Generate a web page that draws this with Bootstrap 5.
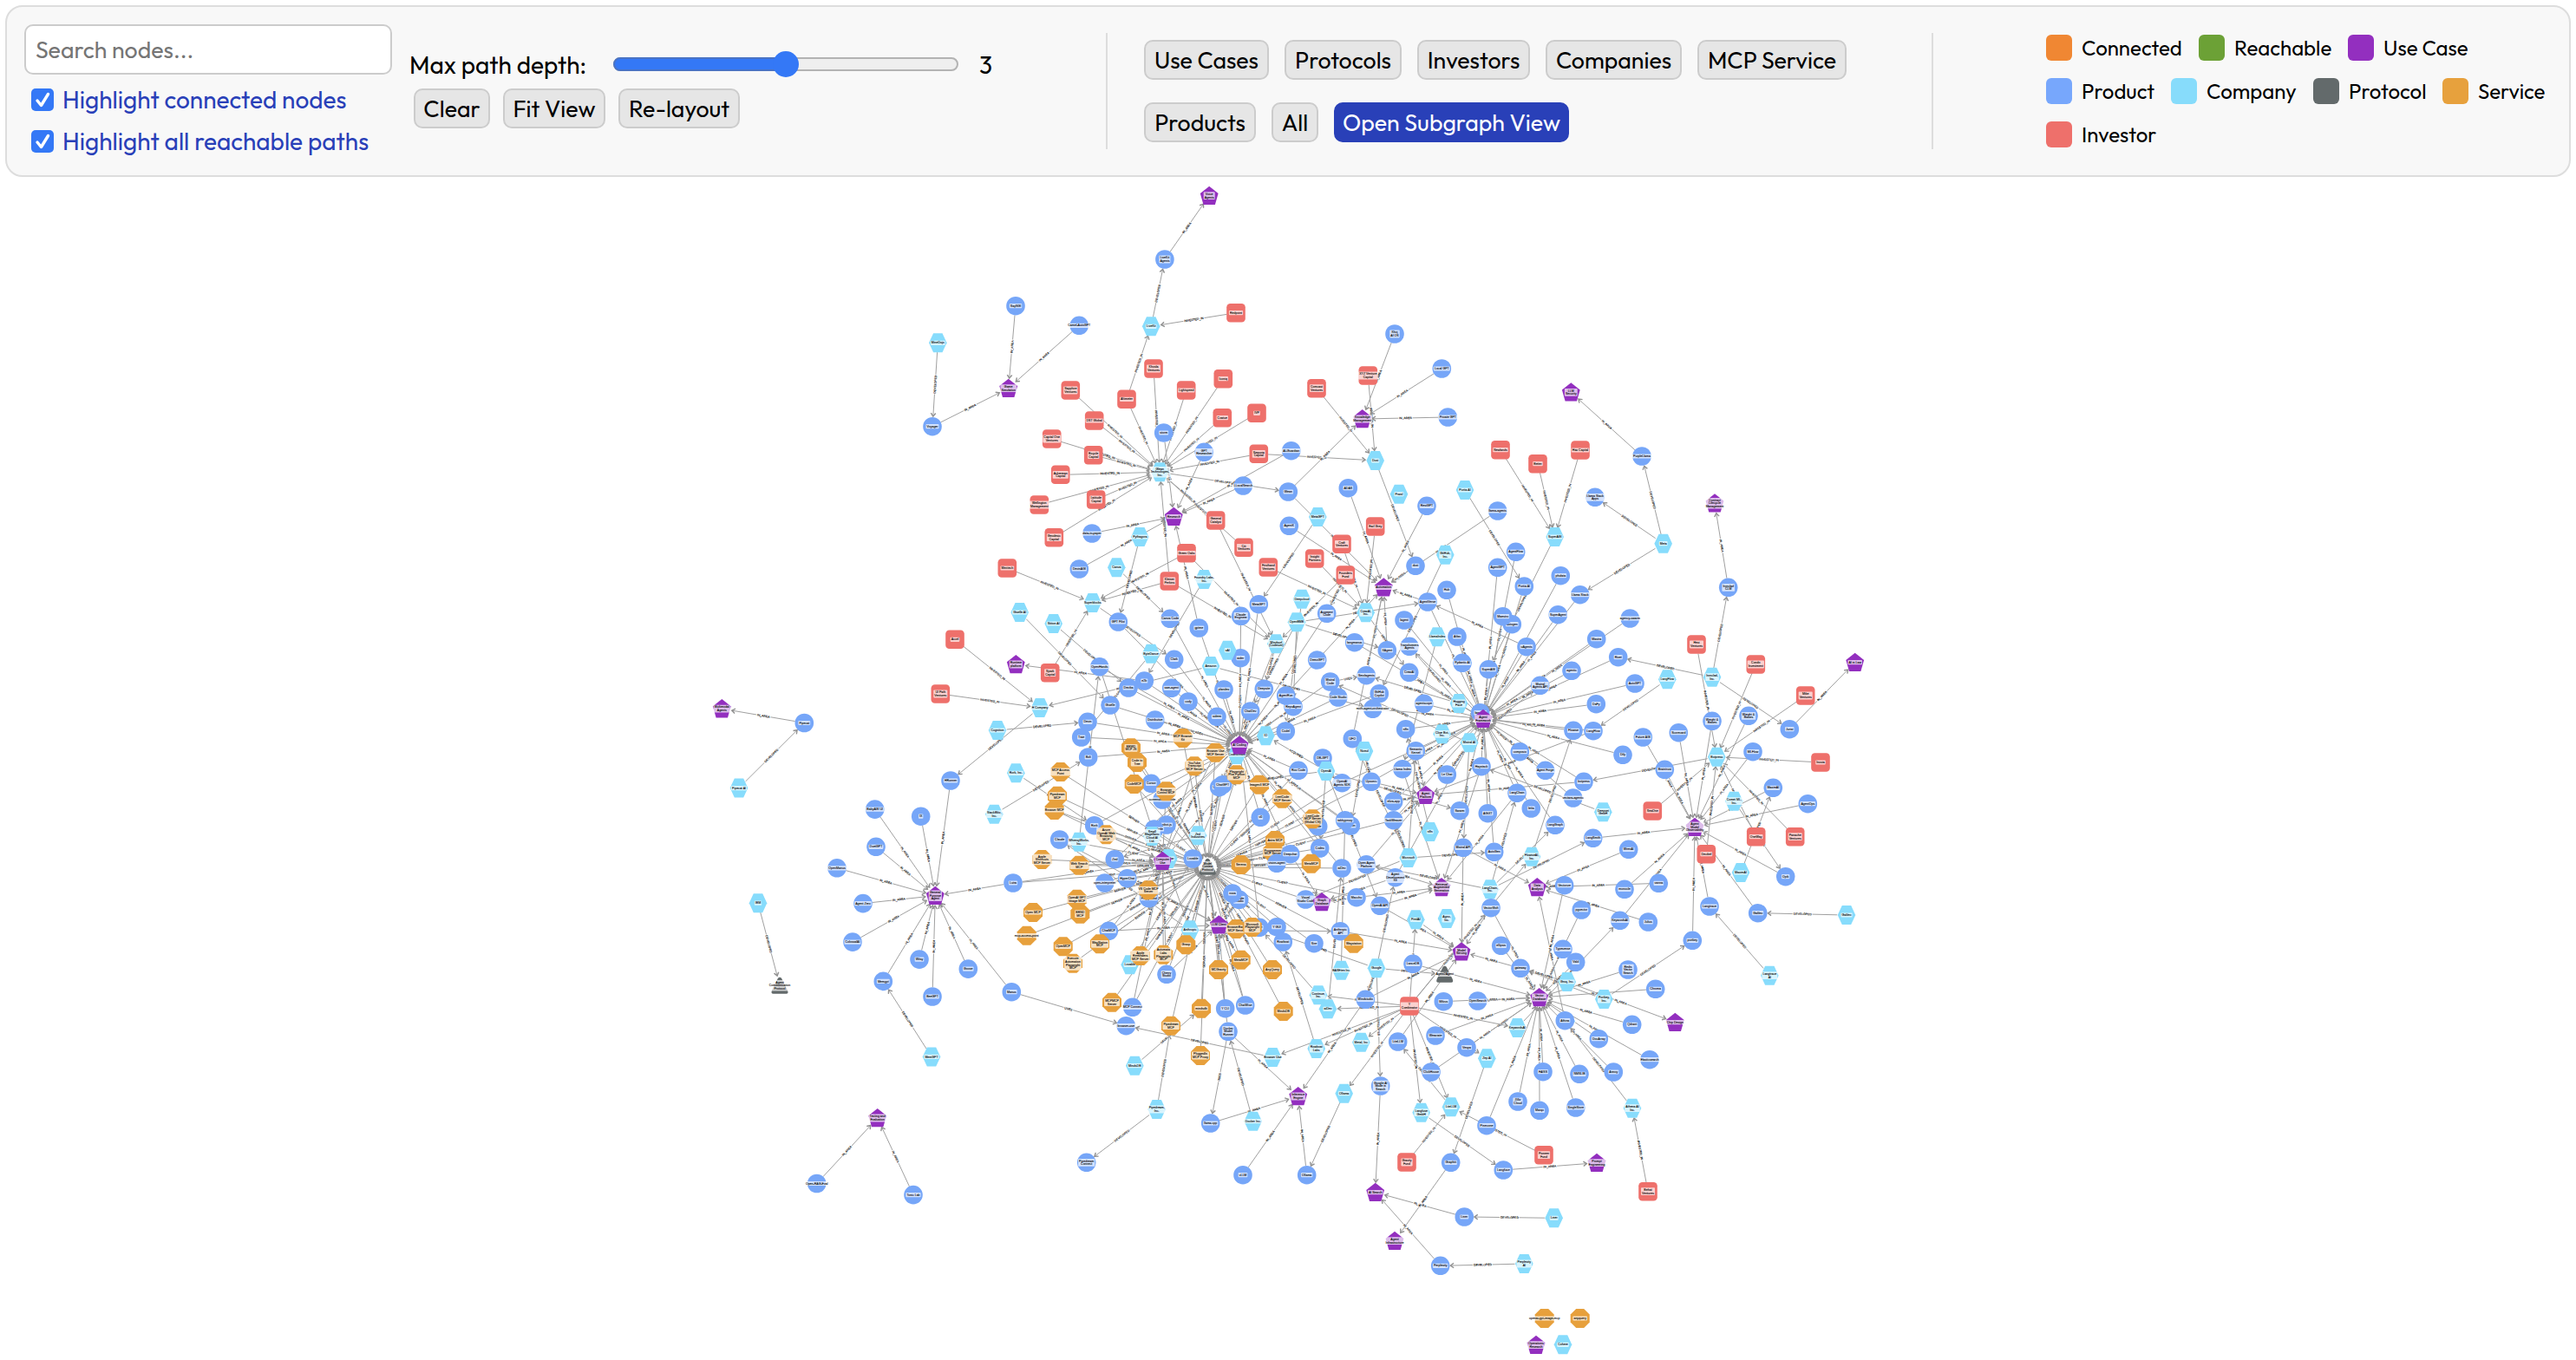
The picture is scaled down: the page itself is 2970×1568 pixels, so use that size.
<!DOCTYPE html>
<html lang="en">
<head>
  <meta charset="UTF-8" />
  <title>Agent Ecosystem Graph</title>
  <link href="https://cdn.jsdelivr.net/npm/bootstrap@5.3.0/dist/css/bootstrap.min.css" rel="stylesheet" />
  <style>
    body { font-family: Outfit, Lato, sans-serif; font-size: 28px; color: #000; background: #fff; overflow: hidden; }
    #controls { height: 198px; margin: 6px 6px 0; border: 2px solid #ddd; border-radius: 20px; background: #f8f8f8; }
    #controls label, #controls span, #controls button { line-height: 1; white-space: nowrap; }
    .search-col { width: 448px; padding: 20px 0 0 20px; }
    #search { width: 424px; height: 58px; border: 2px solid #ccc; border-radius: 10px; padding: 0 11px; font-size: 26.7px; line-height: 1; background: #fff; }
    #search::placeholder { color: #757575; opacity: 1; }
    .tick-row { height: 26px; margin-left: 8px; color: #2940b8; }
    .tick-row svg { width: 26px; height: 26px; margin-right: 10px; }
    .tick-row.first-tick { margin-top: 16px; margin-bottom: 22px; }
    .depth-col { width: 819px; padding: 51px 0 0 16px; }
    .depth-row { height: 32px; }
    .depth-row .depth-label { width: 235px; }
    #depth { width: 398px; height: 32px; }
    .tool-btn { height: 46px; border: 2px solid #ccc; border-radius: 10px; background: #e6e6e6; color: #000; font-size: 26.7px; padding: 0; }
    .action-row { gap: 15px; margin: 11px 0 0 5px; }
    .filter-col { width: 954px; height: 134px; margin-top: 30px; padding: 8px 0 0 42px; border-left: 2px solid #ddd; border-right: 2px solid #ddd; }
    .filter-row { gap: 18px; }
    .filter-row + .filter-row { margin-top: 26px; }
    .subgraph-btn { border-color: #2940b8; background: #2940b8; color: #fff; }
    .legend-col { margin: 32px 0 0 130px; font-size: 24px; }
    .legend-row { height: 30px; gap: 20px; margin-bottom: 20px; }
    .legend-row i { width: 30px; height: 30px; border-radius: 6px; margin-right: 11px; }
    #graph { display: block; width: 2970px; height: 1364px; font-family: "Liberation Sans", Arial, sans-serif; font-size: 3.55px; }
    #graph text { text-anchor: middle; fill: #000; stroke: #000; stroke-width: .08; }
    #graph .link-line { stroke: #a0a0a0; stroke-width: 1; fill: none; }
    #graph .link-tip { stroke: #909090; stroke-width: 1.4; fill: none; }
    .w-clear { width: 88px; } .w-fit { width: 118px; } .w-relayout { width: 140px; }
    .w-usecases { width: 144px; } .w-protocols { width: 135px; } .w-investors { width: 130px; }
    .w-companies { width: 157px; } .w-mcp { width: 172px; } .w-products { width: 129px; }
    .w-all { width: 54px; } .w-subgraph { width: 271px; }
    .l-connected { width: 115px; } .l-reachable { width: 111px; } .l-usecase { width: 96px; }
    .l-product { width: 83px; } .l-company { width: 103px; } .l-protocol { width: 88px; }
  </style>
</head>
<body>
  <div id="controls" class="d-flex align-items-start">
    <div class="search-col flex-shrink-0">
      <input type="text" id="search" class="d-block" placeholder="Search nodes..." />
      <div class="tick-row first-tick d-flex align-items-center">
        <svg viewBox="0 0 26 26"><rect width="26" height="26" rx="5" fill="#3478f6"/><path d="M7 14l4.500 5.500L19.500 6.500" fill="none" stroke="#fff" stroke-width="3.400" stroke-linecap="round" stroke-linejoin="round"/></svg>
        <label>Highlight connected nodes</label>
      </div>
      <div class="tick-row d-flex align-items-center">
        <svg viewBox="0 0 26 26"><rect width="26" height="26" rx="5" fill="#3478f6"/><path d="M7 14l4.500 5.500L19.500 6.500" fill="none" stroke="#fff" stroke-width="3.400" stroke-linecap="round" stroke-linejoin="round"/></svg>
        <label>Highlight all reachable paths</label>
      </div>
    </div>
    <div class="depth-col flex-shrink-0">
      <div class="depth-row d-flex align-items-center">
        <label class="depth-label">Max path depth:</label>
        <svg id="depth" viewBox="0 0 398 32">
          <rect x="1" y="8" width="396" height="14" rx="7" fill="#efefef" stroke="#b3b3b3" stroke-width="2"/>
          <path d="M199 8H8a7 7 0 0 0 0 14h191z" fill="#3478f6" stroke="#4a73c4" stroke-width="2"/>
          <circle cx="199" cy="15" r="15" fill="#3478f6"/>
        </svg>
        <span class="ms-4">3</span>
      </div>
      <div class="action-row d-flex">
        <button class="tool-btn w-clear">Clear</button>
        <button class="tool-btn w-fit">Fit View</button>
        <button class="tool-btn w-relayout">Re-layout</button>
      </div>
    </div>
    <div class="filter-col flex-shrink-0">
      <div class="filter-row d-flex">
        <button class="tool-btn w-usecases">Use Cases</button>
        <button class="tool-btn w-protocols">Protocols</button>
        <button class="tool-btn w-investors">Investors</button>
        <button class="tool-btn w-companies">Companies</button>
        <button class="tool-btn w-mcp">MCP Service</button>
      </div>
      <div class="filter-row d-flex">
        <button class="tool-btn w-products">Products</button>
        <button class="tool-btn w-all">All</button>
        <button class="tool-btn subgraph-btn w-subgraph">Open Subgraph View</button>
      </div>
    </div>
    <div class="legend-col" id="legend"></div>
  </div>

  <svg id="graph" viewBox="0 204 2970 1364"></svg>

  <script>
    const legend = [
      [['Connected', '#f08733'], ['Reachable', '#6ca136'], ['Use Case', '#932fbf']],
      [['Product', '#77a7fc'], ['Company', '#87dcfb'], ['Protocol', '#636a6b'], ['Service', '#e7a13d']],
      [['Investor', '#ee706b']]
    ];
    document.getElementById('legend').innerHTML = legend.map(row =>
      '<div class="legend-row d-flex align-items-center">' + row.map(([name, color]) =>
        `<div class="d-flex align-items-center"><i style="background:${color}"></i><span class="l-${name.toLowerCase().replace(' ', '')}">${name}</span></div>`
      ).join('') + '</div>').join('');

    // u use case, p product, c company, r protocol, s service, i investor
    const fills = { u: '#932fbf', p: '#76a6f8', c: '#87dcfc', r: '#636a6b', s: '#e7a03c', i: '#ee706b' };

    // each group: origin x, origin y, units per pixel x and y, then "type x y label" rows
    const groups = [
      [1120, 400, 3, 3, `
i 343 150 Sapphire/Ventures
u 128 143 Game/Simulation
i 630 75 Khosla/Ventures
i 743 150 Lightspeed
i 871 110 Iconiq
i 537 181 Altimeter
i 425 255 DST Global
i 987 229 IVP
i 868 245 Coatue
p 665 297 storm
i 278 318 Capital One/Ventures
p 805 364 GPT/Researcher
i 422 374 Bicycle/Capital
i 994 370 Sequoia/Capital
p 1106 359 AI-Guardian
c 652 433 Glean/Technologies,/Inc.
i 308 442 Ackerman/Capital
i 235 546 Wellington/Management
i 431 528 Latitude/Capital
p 940 480 LLocalSearch
p 1096 501 Glean
p 1303 488 ADAS
u 700 587 Research
i 845 600 General/Catalyst
p 417 645 data-to-paper
c 583 657 Pythagora
i 286 659 Geodesic/Capital
c 1198 588 MetaGPT
p 1099 619 AgentK
i 1397 621 Earl Grey
i 1372 99 XYZ Venture/Capital
i 1194 143 Comcast/Ventures
u 1352 249 Knowledge/Management
c 1397 393 Dust
i 744 713 Green Oaks
i 942 694 Citi/Ventures
i 1281 682 Craft/Ventures
i 1187 732 Insight/Partners
i 124 765 Meritech
p 373 768 DevinAGI
c 502 763 Canva
i 685 810 Kleiner/Perkins
c 805 804 Foundry Labs,/Inc.
i 1027 762 Firsthand/Ventures
i 1294 789 Founders/Fund
c 419 885 Superblocks
u 1426 832 Automation
c 167 918 Giselle AI
c 284 957 Stition AI
p 508 951 GPT Pilot
p 687 940 Canva Code
p 787 972 gptme
p 932 931 Claude/Engineer
p 994 890 MetaGPT
c 1143 872 Deepcloud
p 1229 922 Augment/Code
c 1364 919 CrewAI,/Inc.
c 1125 952 OpenBMB
p 1325 1022 langmanus
p 1438 1049 XAgent
c 1054 1027 Windsurf/(Codeium)
c 621 1061 ByteDance
p 701 1081 Clark
p 931 1076 aider
c 886 1049 xAI
c 828 1104 Amazon
p 1196 1083 DemoGPT
u 154 1098 Runtime/platform
i 272 1127 Spark/Capital
p 443 1106 OpenHands
p 598 1155 e2b
p 543 1179 Devika
p 692 1180 swe-agent
p 873 1185 plandex
p 1012 1183 Deepsite
p 1241 1158 Mistral/Code
p 1366 1136 Smolagents
p 1113 1244 RepoAgent
p 1088 1206 AgentRun
p 1268 1212 Code Studio
p 1388 1252 multi-agent-orchestrator
p 1411 1199 GitHub/Copilot
p 750 1227 cody
c 237 1248 H Company
p 480 1239 Giselle
p 965 1260 ChatDev
p 849 1279 sidemi
p 380 1350 Trae
p 402 1297 Devin
p 635 1290 Distributive
p 1087 1329 Codel
c 90 1326 Cognition
c 1018 1345 IO
s 731 1353 MCP Browser/Kit
p 1318 1355 UFO`],
      [1600, 400, 3, 3, `
p 24 -45 Khoj/AI OS
p 187 75 Local GPT
p 208 243 Private GPT
u 634 157 LLM/Security
i 390 356 Newlands
i 519 404 Better
i 666 357 Hax Capital
p 879 378 PurpleLlama
c 267 495 Portia AI
p 135 550 RestGPT
p 380 567 llama-agents
p 717 520 Llama Stack/Apps
c 39 509 PraisI
c 578 657 SuperAGI
c 953 680 Meta
u 1131 541 Contract/Lifecycle/Management
p 443 709 AgentFlow
c 199 719 GitHub,/Inc.
p 96 757 dust
p 380 763 AgentGPT
p 598 791 phidata
p 472 828 Portia AI
p 204 841 Hub
p 665 857 Llama Stack
p 138 882 AgentVerse
p 57 945 lagent
p 430 959 autogen
p 398 932 Maestro
p 589 926 SuperAgent
p 838 939 agency-swarm
p 1178 832 Ironclad/CLM
c 171 1003 LlamaIndex
p 240 1002 Atlas
p 75 1036 Transformers/Agents
p 480 1037 uAgents
p 722 1010 Mastra
p 797 1073 Rivet
i 1068 1029 Hexi/Ventures
i 1273 1098 Condo/Investment
i 1445 1206 Mike/Ventures
p 74 1126 CrewAI
p 258 1093 Pydantic AI
p 349 1115 SuperAGI
p 636 1120 agentic
p 855 1164 AutoGPT
c 967 1150 LangFlow
c 1122 1142 Ironclad,/Inc.
p 527 1171 Mistral/Agents API
p 721 1235 DaFy
p 125 1234 agentscope
c 246 1233 Hugging/Face
p 320 1265 langroid
u 330 1286 Agent/Framework
p 62 1322 n8n
c 188 1339 Cline Bot,/Inc.
c 282 1369 Mistral AI
p 642 1327 Flowise
p 711 1328 LangFlow
p 1122 1294 Weight &/Biases
p 1248 1276 Weight &/Biases#2
p 1390 1322 Jurist
p 1006 1334 Scorecard
p 883 1350 Future AGI
u 1616 1091 AI in Law`],
      [1120, 840, 3, 3, `
i -57 -308 Accel
s 552 67 BRWD/MCP JS
s 573 117 Code to/Tree
p 404 99 Bolt
c 154 154 Rork, Inc.
s 308 150 MCP Access/Point
p 622 190 Cursor
s 563 192 CodeMCP
p 660 246 screenshot-to-code
s 673 217 Browser/Control MCP
s 771 130 YouTube/Transcript/MCP Server
s 844 83 Browser Use/MCP Server
c 918 90 Codestream
u 927 58 AI Coding
p 857 203 Windsurf
p 869 194 ChatGPT
s 917 160 Playwright/Plus Python/MCP
s 996 194 Imagen3 MCP
s 1075 242 LeetCode/MCP Server
p 1131 145 Roo Code
p 1215 102 DB-GPT
c 1227 147 OpenAI
p 1282 188 OpenAI/Agents SDK
c 1359 78 Nomd
p 1383 184 Upsonic
s 297 233 Pipedream/MCP
s 287 282 Browser MCP
c 79 296 StackBlitz,/Inc.
p 425 335 Rork
s 466 367 Azure/OpenAI Web/Browsing/MCP
p 675 333 robot.js
p 632 348 Claude Code
c 625 372 Small/Magellanic/Cloud AI/Ltd.
c 783 370 Zed/Industries
p 1000 307 v0
p 1199 338 Aide
s 1180 313 LeetCode/MCP Server/(Global CN)
p 1312 336 Devon
p 1292 317 tabbyproxy
p 305 384 Claude
c 372 392 WhimsyWorks,/Inc.
s 1050 387 Astra MCP
s 1042 427 Programmer/MCP Server
p 1103 434 Deepchat
p 1205 414 Codex
s 244 453 Apple/Shortcuts/MCP Server
s 373 473 Web Search/MCP
p 496 452 Zed
c 682 450 Simular
u 661 458 Computer/Use
r 817 478 Model/Context/Protocol
p 766 450 Lovable
s 932 471 Serena
p 1056 466 vision-agent
s 1175 467 MetaMCP
p 1281 483 aiDev
p 1366 470 Open Agent/Platform
p 144 534 Lutra
p 461 534 open-interpreter
p 539 518 HyperChat
p 614 587 Playground
s 612 559 VS Code MCP/Server
p 926 592 Cloude/Studio
p 903 570 nova
p 1156 591 Visual/Studio Code
u 1212 600 Graph/Database
p 1332 584 Macchu
p 1413 613 OpenAI API
s 365 590 OpenAI GPT/Image MCP
s 213 636 Open MCP
s 376 641 BRND/MCP
s 191 716 mcp-access-point
p 475 700 ChatMCP
s 317 754 OpenMCP#2
s 444 745 WayStation/MCP
s 351 812 Execute/Automation/Playwright/MCP
c 756 697 Anthropic
u 856 679 LLM Client
s 916 693 BrowserBase/MCP Server
p 996 688 Blue
s 971 687 Microsoft/Playwright/MCP
p 1056 686 Y GUI
p 1078 738 Rowboat
p 1185 743 Sire
p 1276 701 Anthropic/API
s 1322 743 Waystation
s 742 748 Grasp
c 548 817 Lovable
s 584 786 Apple/Reminders/MCP Server
s 664 782 Automata/Labs/Playwright/MCP
p 675 850 Cherry/Studio
s 932 800 MetaMCP#2
s 855 834 MCGravity
s 1041 834 AnyQuery
c 1279 836 BASEten Inc
c 1401 829 Google
p 139 911 Manus
c 1200 922 Continue,/Inc.
c 1233 970 aiDev
p 1363 937 Windstudio
s 486 947 MCPMCP/Server
p 557 964 MCP Connect
s 795 968 mindsdb
p 878 968 Y CLI
p 947 957 ChatWise
s 1079 978 MindsDB
p 535 1028 browser-use
s 690 1028 Pipedream/MCP#2
p 888 1048 Docker/Model/Runner
s 792 1131 PluggedIn/MCP Proxy
c 565 1166 MindsDB
c 1042 1137 Browser Use
c 1193 1107 Rowboat/Labs
c 1348 1085 Metal, Inc`],
      [1600, 840, 3, 3, `
p 97 77 Semantic/Kernel
p 51 140 Llama Index
u 131 230 Agent/Platform
p 205 159 Le Chat
p 20 252 eliza-app
p 20 317 TaskWeaver
p 457 80 composio
p 324 131 Haystack
p 545 145 Agent Forge
p 813 91 Dify
p 678 184 botpress
p 447 223 LangChain
p 641 240 vectara-agentic
p 249 284 Swarm
p 346 293 AGiXT
p 496 276 letta
c 745 289 Deepset/GmbH
c 146 357 n8n
p 579 334 LangGraph
p 261 412 Mistral API
p 368 427 AutoGen
c 71 447 Microsoft
c 498 443 FlowiseAI,/Inc.
p 710 379 LangSmith
p 833 418 WrenAI
p 26 515 Agent/Development/Kit
u 186 549 Retrieval/Augmented/Generation
c 354 556 LangChain,/Inc.
u 517 549 Data/Analysis
p 611 542 Vectorize
p 819 556 monocle
p 937 535 vanna
p 670 627 pgvector
p 357 620 VectorShift
c 204 657 Agno,/Inc.
c 97 661 PredAI
p 803 664 KeywordsAI
p 901 669 Julius
p 392 751 ellipsis
u 255 772 Model/Serving
p 87 814 LanceDB
p 606 763 Typesense
p 650 808 Vald
p 459 829 gateway
r 197 850 Agent2Agent
c 620 876 Groq, Inc.
p 831 834 Redis/Vector/Search
p 926 901 Chroma
c 748 936 Portkey,/Inc.
u 524 930 Vector/Database
p 193 944 Milvus
p 311 942 OpenSearch
i 75 960 Y/Combinator
c 448 1035 KeywordsAI
p 613 1010 Athina
p 845 1024 Qdrant
u 994 1016 Chip Design
p 730 1073 DocArray
p 165 1062 Weaviate
p 35 1083 LiteLLM
p 273 1103 Vespa
c 343 1141 Zep AI
p 150 1188 ClickHouse
p 537 1187 FAISS
p 663 1195 NMSLIB
p 781 1188 Annoy
p 906 1145 Elasticsearch
p 958 142 Braintrust
c 1138 98 Botpress
p 1263 80 MLFlow
i 1497 117 Inovia
p 1333 205 MaximAI
c 1198 251 Comet ML,/Inc.
p 1453 260 AgentOps
i 916 285 SeaOne
u 1062 341 Agent/Model/Observability
i 1274 374 OneWay
i 1409 374 Panache/Ventures
i 1102 434 Decibel
p 1376 512 Opik
c 1221 498 MaximAI
p 1113 615 Langtrace
p 1280 638 Galileo
p 1054 733 portkey
c 1321 854 Langtrace/AI
c 1587 645 Galileo`],
      [1120, 1240, 3, 3, `
c 641 117 Pipedream,/Inc.
p 398 301 Pipedream/Connect
u 1130 72 Inference/Engine
p 827 165 llama.cpp
c 974 158 Docker Inc.
p 939 344 vLLM
p 1160 344 Ollama
c 1289 62 Ollama
p 1415 36 Google AI/Mode in/Search
u 1397 404 AI Search
u 1464 572 Agent/Infrastructure`],
      [1600, 1240, 3, 3, `
c 116 128 Langfuse/GmbH
c 219 109 LiteLLM
p 342 173 Pinecone
p 450 90 Zilliz/Cloud
p 525 121 Marqo
p 650 111 SingleStore
c 846 113 Athena AI/Inc.
i 66 300 Gravity/Fund
p 218 301 Graphiti
i 540 275 Pioneer/Fund
p 400 327 Langfuse
u 723 302 Prompt/Engineering
i 900 401 Behat/Ventures
p 265 489 Liner
c 575 493 Liner
p 182 658 Perplexity
c 472 651 Perplexity/AI
s 542 840 openai-gpt-image-mcp
s 665 840 anyquery
u 513 932 Operations/Research
c 606 931 Cohere`],
      [800, 780, 3, 2.45, `
u 97 91 Multimodal/Agents
p 382 131 Pipecat
c 156 315 Pipecat AI
i 853 49 UI Path/Ventures
p 888 294 HRunner
p 626 375 BabyAGI UI
p 785 395 IX
p 630 481 DuetGPT
p 495 541 OpenManus
u 835 619 General/Purpose/Agent
p 585 641 Agent Zero
p 549 750 ColossalAI
c 222 640 IBM
r 297 873 Agent/Communication/Protocol
p 780 799 Witsy
p 655 861 Memgpt
p 825 904 BeeGPT
p 949 826 Goose
c 822 1074 MemGPT
u 635 1247 Testing and/Evaluation
p 425 1432 Open-RAG-Eval
p 759 1464 Tonic Lab`],
      [800, 200, 2.24, 3, `
u 1331 77 Voice/Agents
p 1216 297 LiveKit/Agents
c 1181 529 LiveKit
i 1400 482 Redpoint
p 831 458 SayNGI
p 995 526 Camel-AutoGPT
c 630 586 MineDojo
p 616 875 Voyager`]
    ];

    // "<" : every name on the right points at the first, ">" : the first points at every name
    const links = `
INVESTED_IN cGleanTechnologiesInc < iSapphireVentures iDSTGlobal iAltimeter iKhoslaVentures iLightspeed iIconiq iCoatue iIVP iSequoiaCapital iCapitalOneVentures iBicycleCapital iAckermanCapital iWellingtonManagement iLatitudeCapital iGeodesicCapital iGeneralCatalyst iKleinerPerkins iCitiVentures
DEVELOPED cGleanTechnologiesInc > pGlean
INVESTED_IN cLiveKit < iAltimeter iRedpoint
DEVELOPED cLiveKit > pLiveKitAgents
IN_AREA uVoiceAgents < pLiveKitAgents
INVESTED_IN cDust < iSequoiaCapital iXYZVentureCapital iComcastVentures
DEVELOPED cDust > pdust
IN_AREA uResearch < pstorm pGPTResearcher pLLocalSearch pAIGuardian pdatatopaper pgptme pDevinAGI
IN_AREA uGameSimulation < pVoyager pSayNGI pCamelAutoGPT
DEVELOPED cMineDojo > pVoyager
IN_AREA uKnowledgeManagement < pGlean pLocalGPT pPrivateGPT pKhojAIOS
DEVELOPED cMetaGPT > pMetaGPT
INVESTED_IN cWindsurfCodeium < iGeneralCatalyst iGreenOaks iKleinerPerkins iFoundersFund
INVESTED_IN cSuperblocks < iGreenOaks iKleinerPerkins iMeritech iSparkCapital
DEVELOPED cSuperblocks > pClark
DEVELOPED cPythagora > pGPTPilot
DEVELOPED cCanva > pCanvaCode
DEVELOPED cFoundryLabsInc > pe2b
DEVELOPED cGiselleAI > pGiselle
DEVELOPED cStitionAI > pDevika
DEVELOPED cByteDance > pTrae
DEVELOPED cWindsurfCodeium > pWindsurf pDeepsite
IN_AREA uRuntimeplatform < pe2b
INVESTED_IN cHCompany < iAccel iUIPathVentures cAmazon
DEVELOPED cHCompany > pHRunner
DEVELOPED cCognition > pDevin
DEVELOPED cDeepcloud > pCodel
INVESTED_IN cCrewAIInc < iCraftVentures iInsightPartners iFirsthandVentures iEarlGrey
INVESTED_IN pAugmentCode < iFoundersFund
DEVELOPED cCrewAIInc > pCrewAI
DEVELOPED cOpenBMB > pXAgent pChatDev pAgentVerse pRepoAgent
DEVELOPED cAmazon > pmultiagentorchestrator
IN_AREA uAutomation < pGlean pADAS pAgentK pdust pRestGPT pAgentVerse pllamaagents pDemoGPT pSmolagents pXAgent pUFO
IN_AREA uAICoding < pDevin pTrae pDistributive pGiselle pDevika pe2b psweagent pcody psidemi pplandex paider pChatDev pDeepsite pRepoAgent pAgentRun pCodel pAugmentCode pMetaGPT pClaudeEngineer pgptme pClark pOpenHands pCanvaCode pGPTPilot pDemoGPT pMistralCode pCodeStudio pGitHubCopilot pBolt pRooCode pCursor pWindsurf pv0 pAide pCodex pDevon ptabbyproxy pDeepchat pLovable pClaudeCode pZed pscreenshottocode pRork paiDev pBlue
USES pMistralCode > pSmolagents
DEVELOPED cMistralAI > pMistralCode pMistralAPI pMistralAgentsAPI pLeChat
IN_AREA uLLMSecurity < pPurpleLlama
DEVELOPED cMeta > pPurpleLlama pLlamaStackApps pLlamaStack
INVESTED_IN cSuperAGI < iNewlands iBetter iHaxCapital
DEVELOPED cSuperAGI > pSuperAGI
DEVELOPED cPortiaAI > pPortiaAI
IN_AREA uContractLifecycleManagement < pIroncladCLM
DEVELOPED cIroncladInc > pIroncladCLM pRivet pJurist
DEVELOPED cLangFlow > pLangFlow
DEVELOPED cHuggingFace > pTransformersAgents pSmolagents
DEVELOPED cGitHubInc > pGitHubCopilot
DEVELOPED cLlamaIndex > pLlamaIndex
DEVELOPED cn8n > pn8n
IN_AREA uAIinLaw < pJurist
IN_AREA uAgentFramework < pAgentFlow pAgentGPT pphidata pPortiaAI pHub pLlamaStack pAgentVerse plagent pautogen pMaestro pSuperAgent pagencyswarm pAtlas pTransformersAgents puAgents pMastra pRivet pCrewAI pPydanticAI pSuperAGI pagentic pAutoGPT pMistralAgentsAPI pDaFy pagentscope pn8n pFlowise pLangFlow pSemanticKernel pLlamaIndex pcomposio pHaystack pAgentForge pDify pbotpress pLangChain pvectaraagentic pSwarm pAGiXT pletta pLangGraph pAutoGen plangmanus pOpenAIAgentsSDK pUpsonic pelizaapp pTaskWeaver pmultiagentorchestrator pAgentDevelopmentKit
IN_AREA pAgentVerse < puAgents
INVESTED_IN cBotpress < iHexiVentures iCondoInvestment iMikeVentures iInovia iSeaOne iPanacheVentures iDecibel iOneWay
DEVELOPED cBotpress > pbotpress
DEVELOPED cMaximAI > pMaximAI
DEVELOPED cCometMLInc > pOpik
DEVELOPED cLangtraceAI > pLangtrace
DEVELOPED cGalileo > pGalileo
IN_AREA uAgentModelObservability < pBraintrust pFutureAGI pScorecard pWeightBiases pWeightBiases2 pMLFlow pAgentOps pMaximAI pOpik pLangSmith pmonocle pKeywordsAI pLangtrace pGalileo pportkey
IN_AREA uAgentPlatform < pbotpress pUpsonic pOpenAgentPlatform pTaskWeaver pelizaapp pLangFlow pSemanticKernel
DEVELOPED cDeepsetGmbH > pHaystack
DEVELOPED cLangChainInc > pLangChain pLangGraph pLangSmith pOpenAgentPlatform
DEVELOPED cFlowiseAIInc > pFlowise
DEVELOPED cMicrosoft > pAutoGen pSemanticKernel pTaskWeaver pVisualStudioCode pUFO
DEVELOPED cOpenAI > pOpenAIAgentsSDK pSwarm pCodex pChatGPT pOpenAIAPI
ACQUIRED cOpenAI > cIO
DEVELOPED cGoogle > pAgentDevelopmentKit pGoogleAIModeinSearch pWindstudio pBlue rAgent2Agent
IN_AREA uRetrievalAugmentedGeneration < pHaystack pLlamaIndex pOpenAgentPlatform pMacchu pOpenAIAPI pLangChain
IN_AREA uDataAnalysis < pWrenAI pvanna pVectorize pJulius pMistralAPI pAthina
IN_AREA uGraphDatabase < pMacchu pDeepchat pAgentDevelopmentKit
IN_AREA uModelServing < pMistralAPI pAnthropicAPI pOpenAIAPI pgateway pLiteLLM pVectorShift pWindstudio cPredAI
IN_AREA uVectorDatabase < pMilvus pOpenSearch pWeaviate pVespa pClickHouse pFAISS pNMSLIB pAnnoy pElasticsearch pDocArray pQdrant pChroma pRedisVectorSearch pTypesense pVald ppgvector pVectorize pVectorShift pLanceDB pZillizCloud pMarqo pSingleStore pPinecone pellipsis pgateway
DEVELOPED cPortkeyInc > pportkey pgateway
DEVELOPED cKeywordsAI > pKeywordsAI
IN_AREA uChipDesign < cGroqInc
DEVELOPED cGroqInc > pgateway
INVESTED_IN iYCombinator > cContinueInc caiDev cRowboatLabs cBrowserUse cMetalInc cKeywordsAI cZepAI cLiteLLM cLangfuseGmbH cOllama cPredAI pVectorShift cFlowiseAIInc
DEVELOPED cZepAI > pGraphiti
DEVELOPED cLiteLLM > pLiteLLM
INVESTED_IN cLiteLLM < iGravityFund iPioneerFund
DEVELOPED cLangfuseGmbH > pLangfuse
IN_AREA uPromptEngineering < pLangfuse
DEVELOPED cAthenaAIInc > pAthina
INVESTED_IN cAthenaAIInc < iBehatVentures
DEVELOPED cLiner > pLiner
DEVELOPED cPerplexityAI > pPerplexity
IN_AREA uAISearch < pLiner pPerplexity pGoogleAIModeinSearch
IN_AREA uAgentInfrastructure < pGraphiti
IN_AREA uInferenceEngine < pllamacpp pvLLM pOllama pDockerModelRunner pWindstudio
DEVELOPED cOllama > pOllama
DEVELOPED cDockerInc > pDockerModelRunner
USES pDockerModelRunner > pllamacpp
CLIENT pDockerModelRunner > rModelContextProtocol
DEVELOPED cPipedreamInc > pPipedreamConnect sPipedreamMCP2
DEVELOPED cBrowserUse > pbrowseruse
USES pManus > pbrowseruse
DEVELOPED cMindsDB > smindsdb
DEVELOPED cRowboatLabs > pRowboat
DEVELOPED cContinueInc > pBlue
DEVELOPED cStackBlitzInc > pBolt
DEVELOPED cRorkInc > pRork
DEVELOPED cLovable > pLovable
DEVELOPED cZedIndustries > pZed
DEVELOPED cWhimsyWorksInc > pOpenHands
DEVELOPED cAnthropic > pClaude pClaudeCode pAnthropicAPI rModelContextProtocol
DEVELOPED caiDev > paiDev
DEVELOPED cNomd > pUpsonic pDevon
DEVELOPED cBASEtenInc > ptabbyproxy
IN_AREA uComputerUse < popeninterpreter sBrowserMCP sAzureOpenAIWebBrowsingMCP sWebSearchMCP sBrowserControlMCP pZed pHyperChat pOpenHands sAutomataLabsPlaywrightMCP sWayStationMCP pLutra pPlayground sBrowserUseMCPServer sYouTubeTranscriptMCPServer sPlaywrightPlusPythonMCP sAppleRemindersMCPServer pMCPConnect pCherryStudio
IN_AREA uLLMClient < pChatMCP pHyperChat pCherryStudio pYGUI pYCLI pChatWise pnova pCloudeStudio pLovable pClaude sMetaMCP2 sMCGravity
SERVER rModelContextProtocol < sBRWDMCPJS sCodetoTree sMCPAccessPoint sCodeMCP sBrowserControlMCP sYouTubeTranscriptMCPServer sBrowserUseMCPServer sPlaywrightPlusPythonMCP sImagen3MCP sLeetCodeMCPServer sPipedreamMCP sBrowserMCP sAzureOpenAIWebBrowsingMCP sLeetCodeMCPServerGlobalCN sAstraMCP sProgrammerMCPServer sAppleShortcutsMCPServer sWebSearchMCP sSerena sMetaMCP sVSCodeMCPServer sOpenAIGPTImageMCP sOpenMCP sOpenMCP2 sBRNDMCP smcpaccesspoint sWayStationMCP sExecuteAutomationPlaywrightMCP sBrowserBaseMCPServer sMicrosoftPlaywrightMCP sWaystation sGrasp sAppleRemindersMCPServer sAutomataLabsPlaywrightMCP sMetaMCP2 sMCGravity sAnyQuery sMCPMCPServer smindsdb sMindsDB sPipedreamMCP2 sPluggedInMCPProxy sMCPBrowserKit
CLIENT rModelContextProtocol < pCursor pWindsurf pChatGPT pRooCode pRork pClaude pClaudeCode pZed pDeepchat pCodex pvisionagent paiDev popeninterpreter pHyperChat pnova pCloudeStudio pVisualStudioCode pChatMCP pYGUI pRowboat pSire pCherryStudio pMCPConnect pYCLI pChatWise pv0 pTaskWeaver pDevon pMacchu pUpsonic pBlue pOpenAIAgentsSDK
IN_AREA uGeneralPurposeAgent < pHRunner pBabyAGIUI pIX pDuetGPT pOpenManus pAgentZero pColossalAI pWitsy pMemgpt pBeeGPT pGoose pManus pLutra
DEVELOPED cMemGPT > pMemgpt
CLIENT pLutra > rModelContextProtocol
DEVELOPED cIBM > rAgentCommunicationProtocol
IN_AREA uMultimodalAgents < pPipecat
DEVELOPED cPipecatAI > pPipecat
IN_AREA uTestingandEvaluation < pOpenRAGEval pTonicLab`;

    const R = 10.8;
    const shapes = {
      p: '<circle r="10.8"/>',
      i: '<rect x="-10.8" y="-10.8" width="21.600" height="21.600" rx="4.300"/>',
      c: '<polygon points="-10.300,0 -5.200,-11 5.200,-11 10.300,0 5.200,11 -5.200,11"/>',
      s: '<polygon points="-4.500,-11 4.500,-11 11,-4.500 11,4.500 4.500,11 -4.500,11 -11,4.500 -11,-4.500"/>',
      u: '<polygon points="0,-11 10.400,-2.800 6.700,10.300 -6.700,10.300 -10.400,-2.800"/>',
      r: '<path d="M-2 -8.500Q0 -10.500 2 -8.500L9 5.500Q10.500 9.500 7.500 9.500H-7.500Q-10.500 9.500 -9 5.500Z"/>'
    };
    const measure = document.createElement('canvas').getContext('2d');
    measure.font = '100px "Liberation Sans"';
    const textWidth = (t, size) => measure.measureText(t).width * size / 100;

    const nodes = {};
    groups.forEach(([ox, oy, kx, ky, rows]) => {
      rows.trim().split('\n').forEach(row => {
        const [, type, x, y, label] = row.match(/^(\w) (\S+) (\S+) (.+)$/);
        nodes[type + label.replace(/[^\w]/g, '')] = {
          type, x: ox + x / kx, y: oy + y / ky, lines: label.replace(/#\d/, '').split('/')
        };
      });
    });

    function drawLink(a, b, name) {
      const dx = b.x - a.x, dy = b.y - a.y, len = Math.hypot(dx, dy);
      const ux = dx / len, uy = dy / len;
      const x1 = a.x + ux * R, y1 = a.y + uy * R;
      const x2 = b.x - ux * (R + 0.8), y2 = b.y - uy * (R + 0.8);
      let angle = Math.atan2(dy, dx) * 180 / Math.PI;
      const tip = `<path class="link-tip" transform="translate(${x2.toFixed(1)} ${y2.toFixed(1)}) rotate(${angle.toFixed(1)})" d="M-3.800 -2.700L0 0L-3.800 2.700"/>`;
      if (angle > 90) angle -= 180;
      if (angle < -90) angle += 180;
      const w = textWidth(name, 3.45) + 2;
      return `<path class="link-line" d="M${x1.toFixed(1)} ${y1.toFixed(1)}L${x2.toFixed(1)} ${y2.toFixed(1)}"/>${tip}` +
        `<g transform="translate(${((x1 + x2) / 2).toFixed(1)} ${((y1 + y2) / 2).toFixed(1)}) rotate(${angle.toFixed(1)})">` +
        `<rect x="${-w / 2}" y="-1.900" width="${w}" height="3.800" fill="#fff" fill-opacity=".8"/>` +
        `<text y="1.200" font-size="3.450">${name}</text></g>`;
    }

    function drawNode(n) {
      const h = n.lines.length * 3.6 + 1.6;
      const w = Math.max(...n.lines.map(t => textWidth(t, 3.55))) + 2;
      const text = n.lines.map((t, i) =>
        `<text y="${(-h / 2 + 3.7 + i * 3.6).toFixed(2)}">${t.replace('&', '&amp;')}</text>`).join('');
      return `<g transform="translate(${n.x.toFixed(1)} ${n.y.toFixed(1)})"><g fill="${fills[n.type]}">${shapes[n.type]}</g>` +
        `<rect x="${-w / 2}" y="${-h / 2}" width="${w}" height="${h}" rx="0.800" fill="#fff" fill-opacity=".68"/>${text}</g>`;
    }

    let out = '';
    links.trim().split('\n').forEach(row => {
      const [name, first, dir, ...rest] = row.split(' ');
      rest.forEach(key => {
        const a = nodes[dir === '<' ? key : first], b = nodes[dir === '<' ? first : key];
        if (a && b) out += drawLink(a, b, name);
      });
    });
    Object.values(nodes).forEach(n => { out += drawNode(n); });
    document.getElementById('graph').innerHTML = out;
  </script>
  <script src="https://cdn.jsdelivr.net/npm/bootstrap@5.3.0/dist/js/bootstrap.bundle.min.js"></script>
</body>
</html>
